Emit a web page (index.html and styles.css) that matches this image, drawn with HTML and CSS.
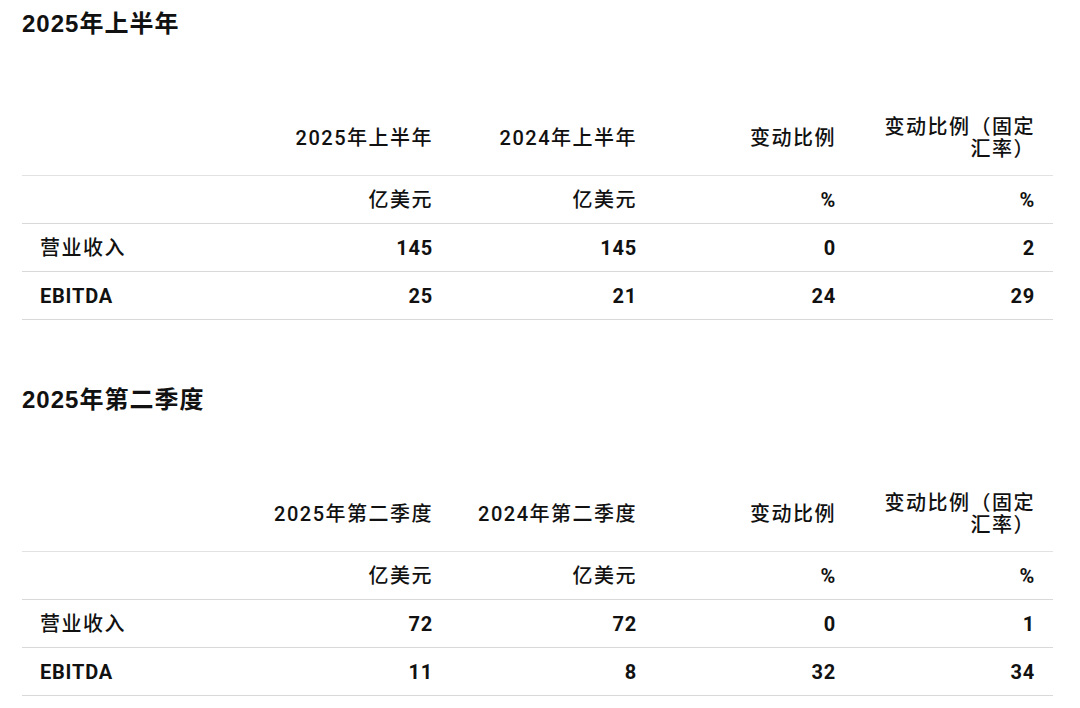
FILE: index.html
```html
<!DOCTYPE html>
<html lang="zh-CN">
<head>
<meta charset="utf-8">
<title>业绩</title>
<link rel="stylesheet" href="styles.css">
</head>
<body>
<main class="page">
  <section class="block">
    <h2 class="title">2025年上半年</h2>
    <table class="fin">
      <colgroup>
        <col class="c-label"><col class="c-a"><col class="c-b"><col class="c-c"><col class="c-d">
      </colgroup>
      <thead>
        <tr><th></th><th>2025年上半年</th><th>2024年上半年</th><th>变动比例</th><th>变动比例（固定汇率）</th></tr>
      </thead>
      <tbody>
        <tr><td></td><td>亿美元</td><td>亿美元</td><td class="num">%</td><td class="num">%</td></tr>
        <tr><td>营业收入</td><td class="num">145</td><td class="num">145</td><td class="num">0</td><td class="num">2</td></tr>
        <tr><td class="num">EBITDA</td><td class="num">25</td><td class="num">21</td><td class="num">24</td><td class="num">29</td></tr>
      </tbody>
    </table>
  </section>
  <section class="block">
    <h2 class="title">2025年第二季度</h2>
    <table class="fin">
      <colgroup>
        <col class="c-label"><col class="c-a"><col class="c-b"><col class="c-c"><col class="c-d">
      </colgroup>
      <thead>
        <tr><th></th><th>2025年第二季度</th><th>2024年第二季度</th><th>变动比例</th><th>变动比例（固定汇率）</th></tr>
      </thead>
      <tbody>
        <tr><td></td><td>亿美元</td><td>亿美元</td><td class="num">%</td><td class="num">%</td></tr>
        <tr><td>营业收入</td><td class="num">72</td><td class="num">72</td><td class="num">0</td><td class="num">1</td></tr>
        <tr><td class="num">EBITDA</td><td class="num">11</td><td class="num">8</td><td class="num">32</td><td class="num">34</td></tr>
      </tbody>
    </table>
  </section>
</main>
</body>
</html>
```
FILE: styles.css
```css
html, body {
  margin: 0;
  padding: 0;
  background: #ffffff;
}
body {
  color: #111111;
  font-family: "Roboto", "Noto Sans CJK SC", sans-serif;
}
.page {
  padding: 9px 0 0 22px;
  width: 1031px;
}
.block + .block {
  margin-top: 65px;
}
.title {
  margin: 0;
  font-family: "Liberation Sans", "Noto Sans CJK SC", sans-serif;
  font-size: 24px;
  line-height: 30px;
  font-weight: 700;
  letter-spacing: 1px;
}
.fin {
  margin-top: 61px;
  width: 1031px;
  border-collapse: collapse;
  table-layout: fixed;
  font-size: 20px;
  font-weight: 500;
  letter-spacing: 1.5px;
}
.c-label { width: 229px; }
.c-a { width: 200px; }
.c-b { width: 204px; }
.c-c { width: 199px; }
.c-d { width: 199px; }
.fin th {
  height: 74px;
  padding: 1px 18px 0 19px;
  text-align: right;
  vertical-align: middle;
  font-weight: 500;
  line-height: 22px;
  border-bottom: 1px solid #e2e2e2;
}
.fin td {
  height: 47px;
  padding: 0 18px 0 18px;
  text-align: right;
  vertical-align: middle;
  line-height: 24px;
  border-bottom: 1px solid #d9d9d9;
}
.fin td:first-child {
  text-align: left;
}
.fin .num {
  font-weight: 700;
  letter-spacing: 0.8px;
}
```
